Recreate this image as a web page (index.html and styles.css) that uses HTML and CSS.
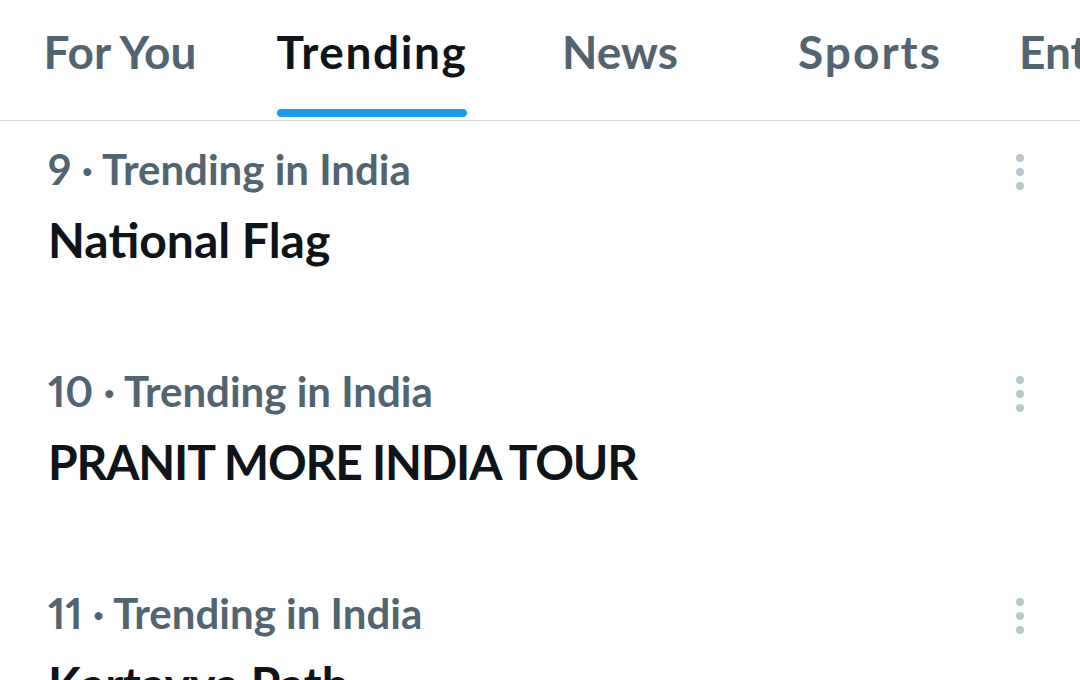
FILE: index.html
```html
<!DOCTYPE html>
<html lang="en">
<head>
<meta charset="utf-8">
<title>Explore</title>
<link rel="stylesheet" href="styles.css">
</head>
<body>
<nav class="tabs">
  <div class="tab"><span class="tab-label">For You</span></div>
  <div class="tab active"><span class="tab-label">Trending</span></div>
  <div class="tab"><span class="tab-label">News</span></div>
  <div class="tab wide"><span class="tab-label">Sports</span></div>
  <div class="tab"><span class="tab-label">Entertainment</span></div>
</nav>
<main class="list">
  <section class="trend">
    <div class="trend-head">
      <span class="trend-meta">9 · Trending in India</span>
      <svg class="more" width="8" height="36" viewBox="0 0 8 36"><circle cx="4" cy="4" r="4"/><circle cx="4" cy="18" r="4"/><circle cx="4" cy="32" r="4"/></svg>
    </div>
    <div class="trend-title">National Flag</div>
  </section>
  <section class="trend">
    <div class="trend-head">
      <span class="trend-meta">10 · Trending in India</span>
      <svg class="more" width="8" height="36" viewBox="0 0 8 36"><circle cx="4" cy="4" r="4"/><circle cx="4" cy="18" r="4"/><circle cx="4" cy="32" r="4"/></svg>
    </div>
    <div class="trend-title caps">PRANIT MORE INDIA TOUR</div>
  </section>
  <section class="trend">
    <div class="trend-head">
      <span class="trend-meta">11 · Trending in India</span>
      <svg class="more" width="8" height="36" viewBox="0 0 8 36"><circle cx="4" cy="4" r="4"/><circle cx="4" cy="18" r="4"/><circle cx="4" cy="32" r="4"/></svg>
    </div>
    <div class="trend-title">Kartavya Path</div>
  </section>
</main>
</body>
</html>
```
FILE: styles.css
```css
html, body {
  margin: 0;
  padding: 0;
  background: #ffffff;
  overflow: hidden;
}
body {
  font-family: Lato, "Noto Sans", sans-serif;
  width: 1080px;
  height: 680px;
}
.tabs {
  display: flex;
  height: 120px;
  border-bottom: 1px solid #cfd9de;
  margin-left: -5px;
  white-space: nowrap;
}
.tab {
  flex: 0 0 auto;
  min-width: 250px;
  box-sizing: border-box;
  padding: 29px 24px 0;
  display: flex;
  flex-direction: column;
  align-items: center;
}
.tab-label {
  font-size: 46px;
  line-height: 46px;
  font-weight: 700;
  color: #536471;
  display: flex;
  flex-direction: column;
  align-items: stretch;
}
.tab.wide .tab-label {
  letter-spacing: 2px;
}
.tab.active {
  padding-left: 28px;
}
.tab.active .tab-label {
  color: #0f1419;
  letter-spacing: 1.6px;
}
.tab.active .tab-label::after {
  content: "";
  display: block;
  height: 8px;
  margin-top: 34px;
  border-radius: 4px;
  background: #1d9bf0;
}
.list {
  display: flex;
  flex-direction: column;
}
.trend {
  height: 222px;
  box-sizing: border-box;
  padding: 27px 56px 0 48px;
}
.trend-head {
  display: flex;
  justify-content: space-between;
  align-items: flex-start;
}
.trend-meta {
  font-size: 42px;
  line-height: 42px;
  font-weight: 700;
  color: #536471;
  font-variant-numeric: proportional-nums;
}
.more {
  fill: #b9c6cd;
  margin-top: 6px;
}
.trend-title {
  margin-top: 26px;
  font-size: 48px;
  line-height: 48px;
  font-weight: 700;
  color: #0f1419;
}
.trend-title.caps {
  letter-spacing: -1.2px;
}
```
